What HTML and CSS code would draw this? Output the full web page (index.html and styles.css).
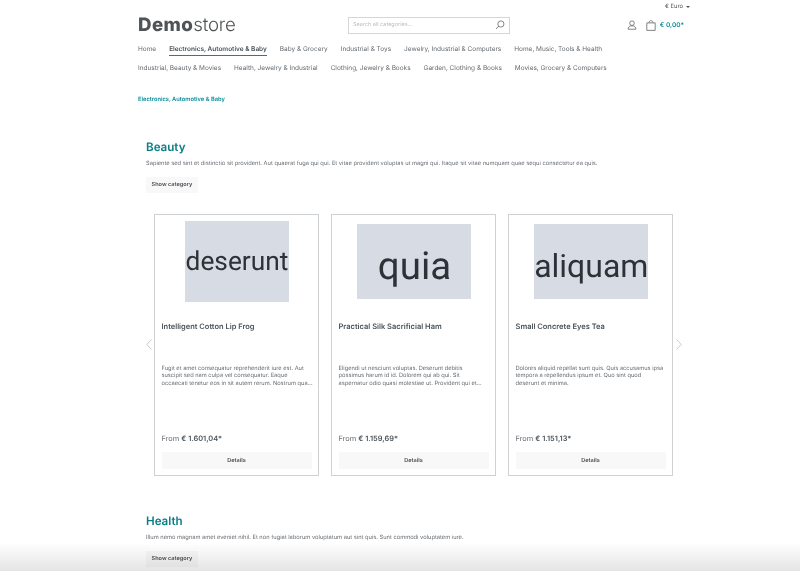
FILE: index.html
```html
<!DOCTYPE html>
<html lang="en">
<head>
<meta charset="utf-8">
<title>Demostore</title>
<link rel="stylesheet" href="styles.css">
</head>
<body>
<div class="page">
  <div class="topbar"><span class="currency">€ Euro</span><span class="caret"></span></div>
  <header class="header">
    <div class="logo"><b>Demo</b><span class="logo-light">store</span></div>
    <div class="search">
      <span class="search-text">Search all categories...</span>
      <svg class="search-icon" width="10" height="10" viewBox="0 0 10 10" fill="none" stroke="#555" stroke-width=".7"><circle cx="5.9" cy="4" r="3.1"/><path d="M3.7 6.2 1 9"/></svg>
    </div>
    <div class="actions">
      <svg class="icon-user" width="10" height="10" viewBox="0 0 10 10" fill="none" stroke="#666" stroke-width=".8"><circle cx="5" cy="3.2" r="2.3"/><path d="M1 9.2c.3-1.900 1.500-3 2.500-3.300h3c1 .3 2.200 1.400 2.500 3.300z"/></svg>
      <svg class="icon-bag" width="10" height="11" viewBox="0 0 10 11" fill="none" stroke="#666" stroke-width=".8"><path d="M.8 2.900h8.400v7.500H.8z"/><path d="M3 2.900c0-3 4-3 4 0"/></svg>
      <span class="cart-price">€ 0,00*</span>
    </div>
  </header>
  <nav class="nav">
    <a>Home</a><a class="active">Electronics, Automotive &amp; Baby</a><a>Baby &amp; Grocery</a><a>Industrial &amp; Toys</a><a>Jewelry, Industrial &amp; Computers</a><a>Home, Music, Tools &amp; Health</a>
    <a>Industrial, Beauty &amp; Movies</a><a>Health, Jewelry &amp; Industrial</a><a>Clothing, Jewelry &amp; Books</a><a>Garden, Clothing &amp; Books</a><a>Movies, Grocery &amp; Computers</a>
  </nav>
  <div class="breadcrumb">Electronics, Automotive &amp; Baby</div>

  <section class="category">
    <h2>Beauty</h2>
    <p class="lead">Sapiente sed sint et distinctio sit provident. Aut quaerat fuga qui qui. Et vitae provident voluptas ut magni qui. Itaque sit vitae numquam quae sequi consectetur ea quis.</p>
    <a class="btn">Show category</a>
  </section>

  <div class="carousel">
    <svg class="arrow arrow-left" width="6" height="11" viewBox="0 0 6 11" fill="none" stroke="#bbb" stroke-width=".8"><path d="M5.500.5.800 5.500l4.700 5"/></svg>
    <svg class="arrow arrow-right" width="6" height="11" viewBox="0 0 6 11" fill="none" stroke="#bbb" stroke-width=".8"><path d="M.5.5l4.700 5-4.700 5"/></svg>
    <article class="card">
      <div class="media"><div class="ph ph-a">deserunt</div></div>
      <h3>Intelligent Cotton Lip Frog</h3>
      <p class="desc">Fugit et amet consequatur reprehenderit iure est. Aut<br>suscipit sed nam culpa vel consequatur. Eaque<br>occaecati tenetur eos in sit autem rerum. Nostrum qua...</p>
      <div class="price">From <b>€ 1.601,04*</b></div>
      <a class="details">Details</a>
    </article>
    <article class="card">
      <div class="media"><div class="ph ph-b">quia</div></div>
      <h3>Practical Silk Sacrificial Ham</h3>
      <p class="desc">Eligendi ut nesciunt voluptas. Deserunt debitis<br>possimus harum id id. Dolorem qui ab qui. Sit<br>aspernatur odio quasi molestiae ut. Provident qui et...</p>
      <div class="price">From <b>€ 1.159,69*</b></div>
      <a class="details">Details</a>
    </article>
    <article class="card">
      <div class="media"><div class="ph ph-c">aliquam</div></div>
      <h3>Small Concrete Eyes Tea</h3>
      <p class="desc">Dolores aliquid repellat sunt quis. Quis accusamus ipsa<br>tempora a repellendus ipsum et. Quo sint quod<br>deserunt et minima.</p>
      <div class="price">From <b>€ 1.151,13*</b></div>
      <a class="details">Details</a>
    </article>
  </div>

  <section class="category category-next">
    <h2>Health</h2>
    <p class="lead">Illum nemo magnam amet eveniet nihil. Et non fugiat laborum voluptatum aut sint quis. Sunt commodi voluptatem iure.</p>
    <a class="btn">Show category</a>
  </section>
</div>
<div class="fade"></div>
</body>
</html>
```
FILE: styles.css
```css
* { box-sizing: border-box; }
html, body { margin: 0; height: 571px; overflow: hidden; background: #fff; }
body { font-family: Inter, "Liberation Sans", sans-serif; color: #4a545b; text-rendering: geometricPrecision; }
h2, h3, p { margin: 0; }

.page { width: 546px; margin-left: 138px; filter: blur(.3px); }

.topbar { height: 13px; margin-right: -6px; display: flex; justify-content: flex-end; align-items: center; gap: 3px; font-size: 5.800px; color: #555; }
.caret { width: 0; height: 0; border: 2px solid transparent; border-top: 2.500px solid #555; border-bottom: 0; }

.header { height: 24px; display: flex; align-items: center; }
.logo { width: 210px; font-size: 18.700px; color: #505356; font-weight: 300; line-height: 24px; }
.logo b { font-weight: 800; letter-spacing: .4px; }
.logo-light { letter-spacing: -.2px; }
.search { width: 162px; height: 17px; border: 1px solid #d4d7da; display: flex; align-items: center; justify-content: space-between; padding: 0 4px; }
.search-text { font-size: 5.500px; line-height: 9px; padding-top: 1px; color: #b9bdc1; }
.actions { margin-left: auto; display: flex; align-items: center; }
.icon-user { margin-right: 9px; }
.icon-bag { margin-right: 4px; }
.cart-price { font-size: 6.500px; font-weight: 600; color: #0b8a96; }

.nav { display: flex; flex-wrap: wrap; column-gap: 13px; margin-top: 5px; font-size: 6.480px; color: #666c72; }
.nav a { height: 19px; line-height: 14px; }
.nav a.active { font-weight: 600; color: #474f56; height: 14px; margin-bottom: 5px; border-bottom: 1px solid #0b8a96; }

.breadcrumb { margin-top: 16px; font-size: 5.750px; font-weight: 600; color: #0b8f9b; line-height: 8px; }

.category { margin-top: 35px; padding-left: 8px; }
h2 { font-size: 11.600px; font-weight: 600; color: #0b7c88; line-height: 16px; }
.lead { margin-top: 5px; font-size: 5.720px; line-height: 8px; color: #666c72; white-space: nowrap; }
.btn { display: inline-block; margin-top: 9px; height: 16px; line-height: 17px; padding: 0 5.500px; background: #f8f8f8; font-size: 5.600px; font-weight: 600; color: #474f56; }

.carousel { position: relative; margin: 21px 0 0 16px; display: grid; grid-template-columns: repeat(3, 165px); gap: 12px; width: 519px; }
.arrow { position: absolute; top: 125px; }
.arrow-left { left: -8px; }
.arrow-right { right: -9px; }

.card { height: 262px; border: 1px solid #cfd2d5; padding: 6px 6.500px; display: flex; flex-direction: column; }
.media { height: 81px; display: flex; align-items: center; justify-content: center; flex-shrink: 0; }
.ph { background: #d7dce4; color: #2e3236; font-family: Roboto, sans-serif; display: flex; align-items: center; justify-content: center; overflow: hidden; white-space: nowrap; }
.ph-a { width: 104px; height: 81px; font-size: 26.300px; padding: 1px 0 0 1px; }
.ph-b { width: 114px; height: 75px; font-size: 38.500px; padding: 10px 0 0 2px; }
.ph-c { width: 114px; height: 75px; font-size: 32px; padding: 9px 0 0 1.500px; }

h3 { margin-top: 20px; font-size: 7.500px; font-weight: 600; color: #4a545b; line-height: 10px; }
.desc { margin-top: 33px; font-size: 5.700px; line-height: 7.300px; color: #666c72; white-space: nowrap; }
.price { margin-top: auto; font-size: 7.400px; line-height: 13px; color: #666c72; }
.price b { font-weight: 600; color: #4a545b; }
.details { display: block; margin-top: 7px; height: 17px; line-height: 18px; background: #f8f8f8; text-align: center; font-size: 5.600px; font-weight: 600; color: #474f56; }

.category-next { margin-top: 37px; }

.fade { position: fixed; left: 0; right: 0; bottom: 0; height: 28px; mix-blend-mode: multiply; background: linear-gradient(to bottom, #fff, #e4e4e4); }
```
